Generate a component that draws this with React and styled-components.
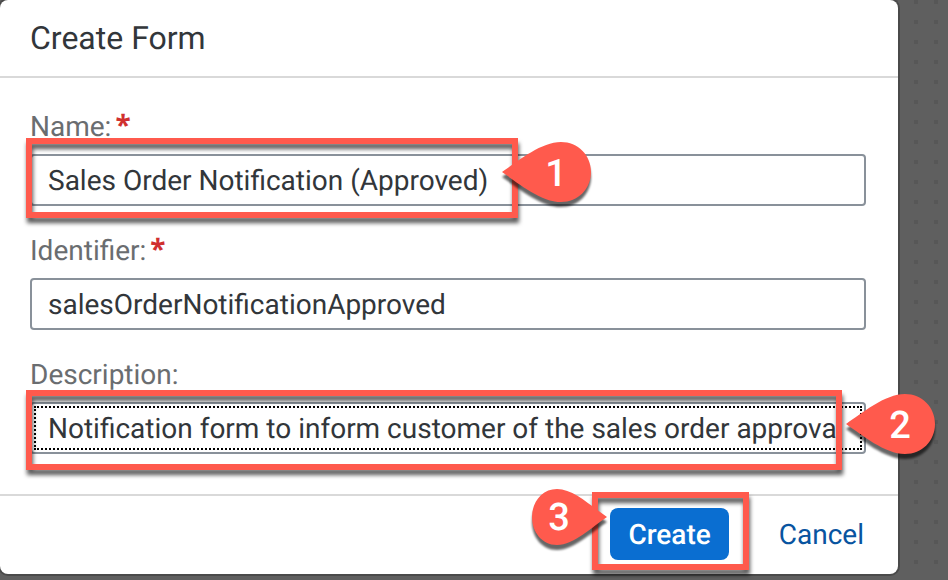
import React from "react";
import styled, { createGlobalStyle, css } from "styled-components";

const GlobalStyle = createGlobalStyle`
  * { box-sizing: border-box; }
  body {
    margin: 0;
    background: #5f5f5f;
    color: #32363a;
    font-family: Roboto, "Noto Sans", sans-serif;
    font-size: 28px;
    text-rendering: geometricPrecision;
  }
`;

const Backdrop = styled.div`
  min-height: 100vh;
  padding: 0 50px 6px 0;
  overflow: hidden;
  background-color: #5f5f5f;
  background-image: conic-gradient(from 90deg at 16px 16px, #575757 25%, transparent 0);
  background-size: 20px 20px;
  background-position: 18px 4px;
`;

const Dialog = styled.section`
  background: #fff;
  border-radius: 8px;
  box-shadow: 0 0 0 2px #4a4a4a;
`;

const Header = styled.header`
  padding: 18px 30px;
  border-bottom: 2px solid #d9d9d9;
`;

const Title = styled.h1`
  margin: 0;
  font-size: 32px;
  line-height: 40px;
  font-weight: 400;
`;

const Body = styled.div`
  display: flex;
  flex-direction: column;
  gap: 24px;
  padding: 28px 32px 40px 30px;
`;

const Field = styled.div`
  display: flex;
  flex-direction: column;
  gap: 6px;
`;

const Label = styled.label`
  display: flex;
  gap: 4px;
  line-height: 42px;
  color: #6a6d70;
`;

const Required = styled.span`
  color: #d0302f;
  font-family: "Noto Sans", sans-serif;
  font-weight: 700;
  font-size: 28px;
  line-height: 38px;
`;

const Anchor = styled.div`
  position: relative;
  display: flex;
`;

const TextInput = styled.input`
  width: 100%;
  height: 52px;
  padding: 0 16px;
  border: 2px solid #89919a;
  border-radius: 4px;
  background: #fff;
  color: inherit;
  font: inherit;
  text-rendering: inherit;
  outline: ${(p) => (p.$focused ? "2px dotted #000" : "none")};
  outline-offset: -6px;
`;

const Footer = styled.footer`
  display: flex;
  justify-content: flex-end;
  gap: 32px;
  padding: 12px 16px 14px;
  border-top: 2px solid #d9d9d9;
`;

const Button = styled.button`
  height: 52px;
  padding: 0 18px;
  border: 0;
  border-radius: 8px;
  font: inherit;
  text-rendering: inherit;
  background: ${(p) => (p.$primary ? "#0a6ed1" : "transparent")};
  color: ${(p) => (p.$primary ? "#fff" : "#0854a0")};
  font-weight: ${(p) => (p.$primary ? 500 : 400)};
`;

const frames = {
  name: css`inset: -16px auto -12px -4px; width: 492px;`,
  description: css`inset: -12px 24px -16px -4px;`,
  create: css`inset: -16px -20px -10px -18px;`,
};

const Frame = styled.span`
  position: absolute;
  ${(p) => frames[p.$on]}
  border: 6px solid #ff5a4d;
  filter: drop-shadow(1px 5px 2px rgba(0, 0, 0, 0.65));
  pointer-events: none;
`;

const places = {
  name: css`left: 472px; top: -14px;`,
  description: css`right: -70px; top: -10px;`,
  create: css`right: 122px; top: -20px;`,
};

const Pin = styled.svg`
  position: absolute;
  ${(p) => places[p.$on]}
  width: ${(p) => (p.$small ? 76 : 90)}px;
  height: ${(p) => (p.$small ? 58 : 64)}px;
  overflow: visible;
  pointer-events: none;
  path { fill: #ff5a4d; filter: drop-shadow(0 5px 1px rgba(0, 0, 0, 0.6)); }
  text {
    fill: #fff;
    font-size: 38px;
    font-weight: 500;
    text-anchor: middle;
  }
`;

function LeftPin({ on, number }) {
  return (
    <Pin $on={on} viewBox="0 0 90 64" aria-hidden="true">
      <path d="M0 32 C16 21 39 2 59 2 C76 2 89 15 89 32 C89 49 76 62 59 62 C39 62 16 43 0 32Z" />
      <text x="54" y="46">{number}</text>
    </Pin>
  );
}

function RightPin({ on, number }) {
  return (
    <Pin $on={on} $small viewBox="0 0 76 58" aria-hidden="true">
      <path d="M76 29 C61 19 43 1 26 1 C11 1 1 14 1 29 C1 44 11 57 26 57 C43 57 61 39 76 29Z" />
      <text x="28" y="42">{number}</text>
    </Pin>
  );
}

function FormField({ id, label, value, required, focused, children }) {
  return (
    <Field>
      <Label htmlFor={id}>
        {label}:{required && <Required>*</Required>}
      </Label>
      <Anchor>
        <TextInput id={id} defaultValue={value} required={required} $focused={focused} />
        {children}
      </Anchor>
    </Field>
  );
}

export default function App() {
  return (
    <>
      <GlobalStyle />
      <Backdrop>
        <Dialog role="dialog" aria-labelledby="title">
          <Header>
            <Title id="title">Create Form</Title>
          </Header>
          <Body>
            <FormField id="name" label="Name" value="Sales Order Notification (Approved)" required>
              <Frame $on="name" />
              <LeftPin on="name" number="1" />
            </FormField>
            <FormField id="identifier" label="Identifier" value="salesOrderNotificationApproved" required />
            <FormField
              id="description"
              label="Description"
              value="Notification form to inform customer of the sales order approval confirmation"
              focused
            >
              <Frame $on="description" />
              <LeftPin on="description" number="2" />
            </FormField>
          </Body>
          <Footer>
            <Anchor>
              <Button type="button" $primary>Create</Button>
              <Frame $on="create" />
              <RightPin on="create" number="3" />
            </Anchor>
            <Button type="button">Cancel</Button>
          </Footer>
        </Dialog>
      </Backdrop>
    </>
  );
}
